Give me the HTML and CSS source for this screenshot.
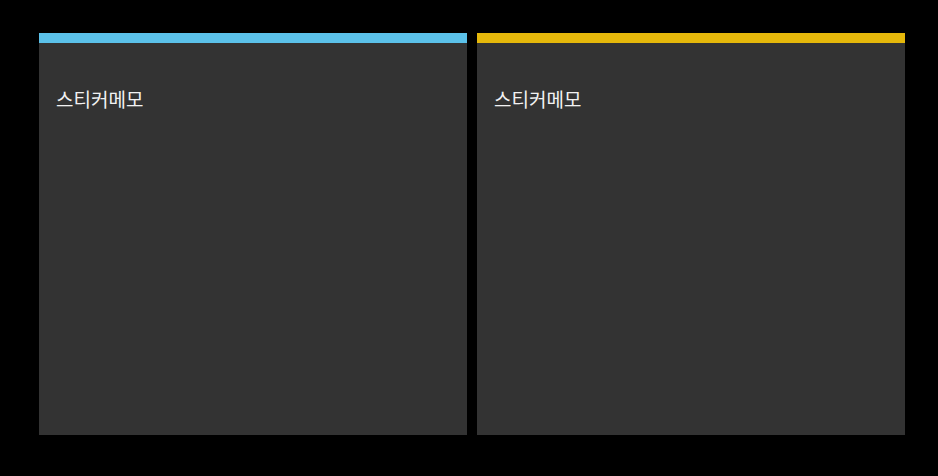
FILE: index.html
```html
<!DOCTYPE html>
<html lang="ko">
<head>
<meta charset="utf-8">
<title>스티커메모</title>
<link rel="stylesheet" href="styles.css">
</head>
<body>
<div class="board">
	<div class="note blue">
		<div class="bar"></div>
		<div class="memo">스티커메모</div>
	</div>
	<div class="note yellow">
		<div class="bar"></div>
		<div class="memo">스티커메모</div>
	</div>
</div>
</body>
</html>
```

FILE: styles.css
```css
*{box-sizing:border-box;}
body{margin:0;background:#000;font-family:"Noto Sans CJK KR","Noto Sans",sans-serif;}
.board{display:flex;gap:10px;padding:33px 33px 0 39px;}
.note{flex:1;height:402px;background:#333;display:flex;flex-direction:column;}
.bar{height:10px;}
.blue .bar{background:#5bc1e9;}
.yellow .bar{background:#e5b80b;}
.memo{padding:43px 16px 0 17px;color:#f2f2f2;font-size:19px;line-height:26px;}
```
